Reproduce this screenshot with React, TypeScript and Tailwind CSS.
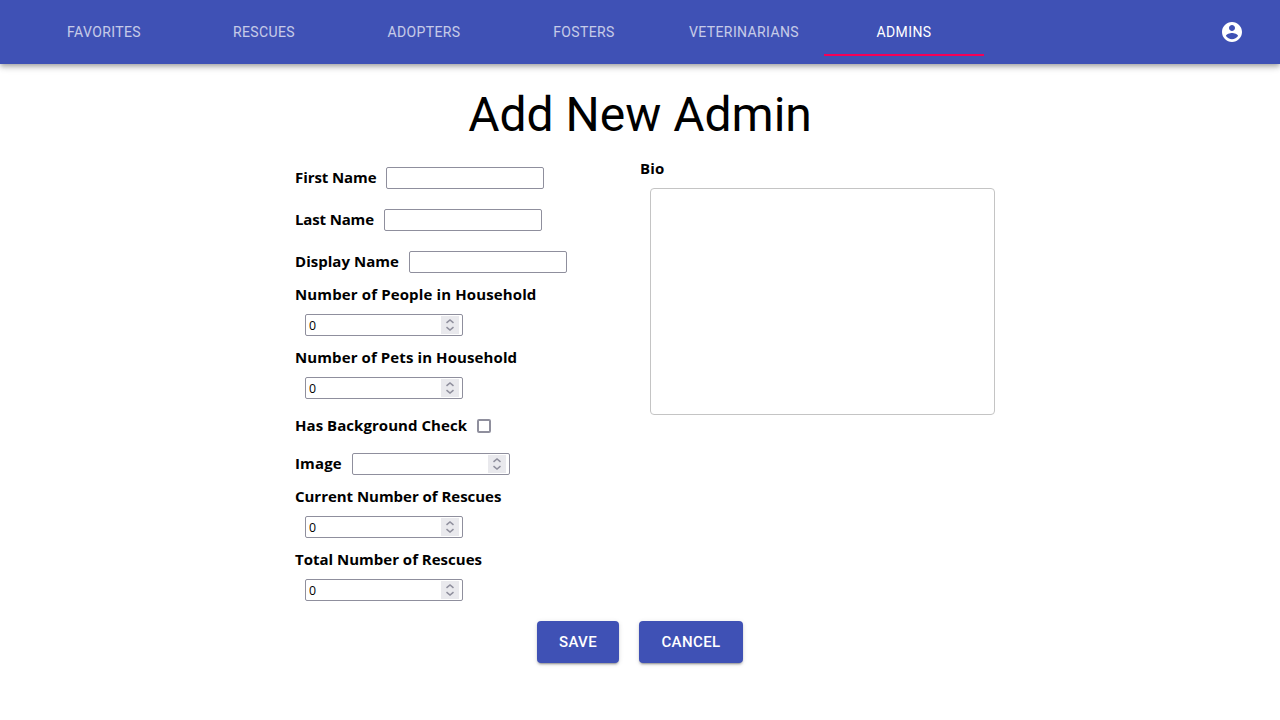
import type { ReactNode } from 'react';

const tabs = ['Favorites', 'Rescues', 'Adopters', 'Fosters', 'Veterinarians', 'Admins'];

function Label({ className, children }: { className: string; children: ReactNode }) {
  return (
    <label
      className={`block h-[21px] shrink-0 whitespace-nowrap font-['Open_Sans',sans-serif] text-[15px] font-bold ${className}`}
    >
      {children}
    </label>
  );
}

function TextField() {
  return <input type="text" className="h-[22px] w-[158px] rounded-[2px] border border-[#8f8f9d] bg-white px-[3px]" />;
}

function NumberField({ value = '' }: { value?: string }) {
  return (
    <div className="flex h-[22px] w-[158px] items-center justify-between rounded-[2px] border border-[#8f8f9d] bg-white pr-[3px] pl-[3px]">
      <span className="origin-left scale-x-95 font-['Open_Sans',sans-serif] text-[13px] leading-[20px]">{value}</span>
      <div className="flex h-[18px] w-[18px] items-center justify-center bg-[#e9e9ed]">
        <svg width="18" height="18" viewBox="0 0 18 18" fill="none" stroke="#8f8f9d" strokeWidth="1.5">
          <path d="M5.5 6.9L9 3.9l3.5 3M5.5 11.1L9 14.1l3.5-3" />
        </svg>
      </div>
    </div>
  );
}

function StackedNumber({ label, labelClass }: { label: string; labelClass: string }) {
  return (
    <div className="h-[63px]">
      <Label className={`leading-[23px] ${labelClass}`}>{label}</Label>
      <div className="p-[10px]">
        <NumberField value="0" />
      </div>
    </div>
  );
}

function Button({ className, children }: { className: string; children: ReactNode }) {
  return (
    <button
      className={`h-[42px] rounded-[4px] bg-[#3f51b5] text-[15px] font-medium text-white uppercase shadow-[0px_3px_1px_-2px_rgba(0,0,0,0.2),0px_2px_2px_0px_rgba(0,0,0,0.14),0px_1px_5px_0px_rgba(0,0,0,0.12)] ${className}`}
    >
      {children}
    </button>
  );
}

export default function App() {
  return (
    <div className="h-[720px] overflow-hidden bg-white font-[Roboto,sans-serif] text-black">
      <header className="flex h-16 items-center justify-between bg-[#3f51b5] pr-9 pl-6 text-white shadow-[0px_2px_4px_-1px_rgba(0,0,0,0.2),0px_4px_5px_0px_rgba(0,0,0,0.14),0px_1px_10px_0px_rgba(0,0,0,0.12)]">
        <nav className="flex">
          {tabs.map((tab) => (
            <div
              key={tab}
              className={`flex h-12 w-40 items-center justify-center text-[14px] font-[450] tracking-[0.38px] uppercase ${
                tab === 'Admins' ? 'border-b-2 border-[#f50057] pt-[2px]' : 'opacity-70'
              }`}
            >
              {tab}
            </div>
          ))}
        </nav>
        <svg width="24" height="24" viewBox="0 0 24 24" fill="currentColor">
          <path d="M12 2C6.48 2 2 6.48 2 12s4.48 10 10 10 10-4.48 10-10S17.52 2 12 2zm0 3c1.66 0 3 1.34 3 3s-1.34 3-3 3-3-1.34-3-3 1.34-3 3-3zm0 14.2c-2.5 0-4.71-1.28-6-3.22.03-1.99 4-3.08 6-3.08 1.99 0 5.97 1.09 6 3.08-1.29 1.94-3.5 3.22-6 3.22z" />
        </svg>
      </header>

      <h1 className="mt-[23px] text-center text-[48px] leading-[56px]">Add New Admin</h1>

      <main className="mx-auto mt-[14px] flex w-[690px]">
        <div className="w-[345px]">
          <div className="flex h-[42px] items-center gap-[10px]">
            <Label className="w-[81px] leading-[19px] tracking-[-0.08px]">First Name</Label>
            <TextField />
          </div>
          <div className="flex h-[42px] items-center gap-[10px]">
            <Label className="w-[79px] leading-[19px] tracking-[-0.15px]">Last Name</Label>
            <TextField />
          </div>
          <div className="flex h-[42px] items-center gap-[10px]">
            <Label className="w-[104px] leading-[19px] tracking-[0.03px]">Display Name</Label>
            <TextField />
          </div>
          <StackedNumber label="Number of People in Household" labelClass="tracking-[0.13px]" />
          <StackedNumber label="Number of Pets in Household" labelClass="tracking-[0.1px]" />
          <div className="flex h-[34px] items-center gap-[10px]">
            <Label className="w-[172px] leading-[19px] tracking-[0.05px]">Has Background Check</Label>
            <input type="checkbox" className="h-[14px] w-[14px] appearance-none rounded-[2px] border-2 border-[#8f8f9d] bg-white" />
          </div>
          <div className="flex h-[42px] items-center gap-[10px]">
            <Label className="w-[47px] leading-[19px] tracking-[0.15px]">Image</Label>
            <NumberField />
          </div>
          <StackedNumber label="Current Number of Rescues" labelClass="tracking-[-0.03px]" />
          <StackedNumber label="Total Number of Rescues" labelClass="" />
        </div>
        <div className="w-[345px]">
          <Label className="leading-[23px] tracking-[0.2px]">Bio</Label>
          <textarea className="mt-[10px] ml-[10px] block h-[227px] w-[345px] resize-none rounded-[4px] border border-[#c4c4c4] bg-white" />
        </div>
      </main>

      <div className="mt-[10px] flex justify-center gap-5">
        <Button className="w-[82px] tracking-[0.4px]">Save</Button>
        <Button className="w-[104px] tracking-[0.4px]">Cancel</Button>
      </div>
    </div>
  );
}
